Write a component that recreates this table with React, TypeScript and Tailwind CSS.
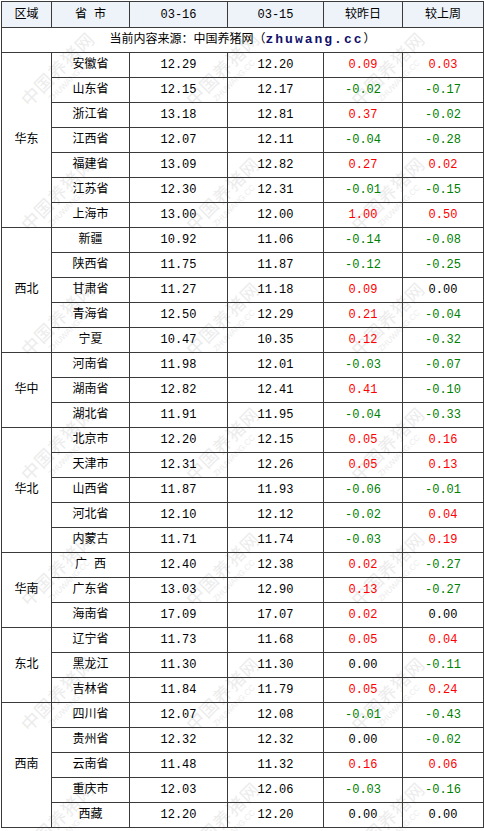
import React from "react";

type Row = [string, string, string, string, string];

const groups: { region: string; rows: Row[] }[] = [
  {
    region: "华东",
    rows: [
      ["安徽省", "12.29", "12.20", "0.09", "0.03"],
      ["山东省", "12.15", "12.17", "-0.02", "-0.17"],
      ["浙江省", "13.18", "12.81", "0.37", "-0.02"],
      ["江西省", "12.07", "12.11", "-0.04", "-0.28"],
      ["福建省", "13.09", "12.82", "0.27", "0.02"],
      ["江苏省", "12.30", "12.31", "-0.01", "-0.15"],
      ["上海市", "13.00", "12.00", "1.00", "0.50"],
    ],
  },
  {
    region: "西北",
    rows: [
      ["新疆", "10.92", "11.06", "-0.14", "-0.08"],
      ["陕西省", "11.75", "11.87", "-0.12", "-0.25"],
      ["甘肃省", "11.27", "11.18", "0.09", "0.00"],
      ["青海省", "12.50", "12.29", "0.21", "-0.04"],
      ["宁夏", "10.47", "10.35", "0.12", "-0.32"],
    ],
  },
  {
    region: "华中",
    rows: [
      ["河南省", "11.98", "12.01", "-0.03", "-0.07"],
      ["湖南省", "12.82", "12.41", "0.41", "-0.10"],
      ["湖北省", "11.91", "11.95", "-0.04", "-0.33"],
    ],
  },
  {
    region: "华北",
    rows: [
      ["北京市", "12.20", "12.15", "0.05", "0.16"],
      ["天津市", "12.31", "12.26", "0.05", "0.13"],
      ["山西省", "11.87", "11.93", "-0.06", "-0.01"],
      ["河北省", "12.10", "12.12", "-0.02", "0.04"],
      ["内蒙古", "11.71", "11.74", "-0.03", "0.19"],
    ],
  },
  {
    region: "华南",
    rows: [
      ["广 西", "12.40", "12.38", "0.02", "-0.27"],
      ["广东省", "13.03", "12.90", "0.13", "-0.27"],
      ["海南省", "17.09", "17.07", "0.02", "0.00"],
    ],
  },
  {
    region: "东北",
    rows: [
      ["辽宁省", "11.73", "11.68", "0.05", "0.04"],
      ["黑龙江", "11.30", "11.30", "0.00", "-0.11"],
      ["吉林省", "11.84", "11.79", "0.05", "0.24"],
    ],
  },
  {
    region: "西南",
    rows: [
      ["四川省", "12.07", "12.08", "-0.01", "-0.43"],
      ["贵州省", "12.32", "12.32", "0.00", "-0.02"],
      ["云南省", "11.48", "11.32", "0.16", "0.06"],
      ["重庆市", "12.03", "12.06", "-0.03", "-0.16"],
      ["西藏", "12.20", "12.20", "0.00", "0.00"],
    ],
  },
];

function colorOf(v: string) {
  if (v.startsWith("-")) return "text-[#008000]";
  if (parseFloat(v) > 0) return "text-[#ff0000]";
  return "text-black";
}

const cell = "border border-[#3a3a3a] p-0 text-center align-middle";

function Watermarks() {
  const marks: { x: number; y: number }[] = [];
  for (let r = 0; r < 7; r++) {
    for (let c = 0; c < 3; c++) {
      marks.push({ x: 15 + c * 165, y: 60 + r * 125 });
    }
  }
  return (
    <div aria-hidden="true" className="pointer-events-none absolute inset-0 z-0 overflow-hidden">
      {marks.map((m, i) => (
        <div
          key={i}
          className="absolute flex -rotate-45 flex-col items-center whitespace-nowrap text-[#ececec]"
          style={{ left: m.x, top: m.y }}
        >
          <span className="text-[18px] leading-none tracking-[1px]">中国养猪网</span>
          <span className="mt-[2px] text-[8px] leading-none font-['Liberation_Sans',sans-serif]">ZHUWANG.CC</span>
        </div>
      ))}
    </div>
  );
}

export default function App() {
  return (
    <div className="relative h-[831px] w-[484px] overflow-hidden bg-white pl-px pt-px font-['Liberation_Mono','Noto_Sans_CJK_SC',monospace] text-[12px] text-black">
      <Watermarks />
      <table className="relative z-10 w-[482px] table-fixed border-collapse">
        <colgroup>
          <col className="w-[50px]" />
          <col className="w-[78px]" />
          <col className="w-[98px]" />
          <col className="w-[96px]" />
          <col className="w-[79px]" />
          <col className="w-[81px]" />
        </colgroup>
        <thead>
          <tr className="h-[26px] bg-[#eef3f9]">
            <th className={cell + " font-normal"}>区域</th>
            <th className={cell + " font-normal"}>省 市</th>
            <th className={cell + " font-normal"}>03-16</th>
            <th className={cell + " font-normal"}>03-15</th>
            <th className={cell + " font-normal"}>较昨日</th>
            <th className={cell + " font-normal"}>较上周</th>
          </tr>
        </thead>
        <tbody>
          <tr className="h-[25px]">
            <td colSpan={6} className={cell}>
              当前内容来源：中国养猪网（
              <span className="font-['Liberation_Mono',monospace] text-[13px] font-bold tracking-[2px] text-[#10106a]">zhuwang.cc</span>
              ）
            </td>
          </tr>
          {groups.map((g) =>
            g.rows.map((r, i) => (
              <tr key={g.region + i} className="h-[25px]">
                {i === 0 && (
                  <td rowSpan={g.rows.length} className={cell}>
                    {g.region}
                  </td>
                )}
                <td className={cell}>{r[0]}</td>
                <td className={cell}>{r[1]}</td>
                <td className={cell}>{r[2]}</td>
                <td className={cell + " " + colorOf(r[3])}>{r[3]}</td>
                <td className={cell + " " + colorOf(r[4])}>{r[4]}</td>
              </tr>
            ))
          )}
        </tbody>
      </table>
    </div>
  );
}
